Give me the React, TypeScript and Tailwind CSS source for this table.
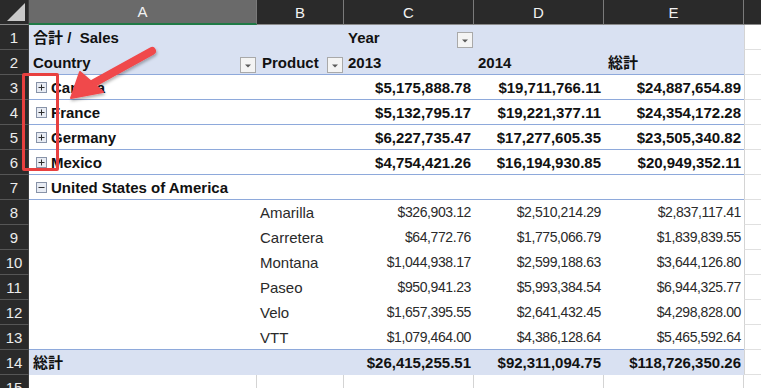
import React from "react";

type Num3 = [string, string, string];

const countries: { name: string; v: Num3 }[] = [
  { name: "Canada", v: ["$5,175,888.78", "$19,711,766.11", "$24,887,654.89"] },
  { name: "France", v: ["$5,132,795.17", "$19,221,377.11", "$24,354,172.28"] },
  { name: "Germany", v: ["$6,227,735.47", "$17,277,605.35", "$23,505,340.82"] },
  { name: "Mexico", v: ["$4,754,421.26", "$16,194,930.85", "$20,949,352.11"] },
];

const products: { name: string; v: Num3 }[] = [
  { name: "Amarilla", v: ["$326,903.12", "$2,510,214.29", "$2,837,117.41"] },
  { name: "Carretera", v: ["$64,772.76", "$1,775,066.79", "$1,839,839.55"] },
  { name: "Montana", v: ["$1,044,938.17", "$2,599,188.63", "$3,644,126.80"] },
  { name: "Paseo", v: ["$950,941.23", "$5,993,384.54", "$6,944,325.77"] },
  { name: "Velo", v: ["$1,657,395.55", "$2,641,432.45", "$4,298,828.00"] },
  { name: "VTT", v: ["$1,079,464.00", "$4,386,128.64", "$5,465,592.64"] },
];

function RowHead({ n }: { n: number }) {
  return (
    <div className="w-[29px] shrink-0 h-full bg-[#2a2a2a] border-b border-r border-b-[#565656] border-r-[#3d3d3d] flex items-center justify-center text-[15px] text-[#ececec]">
      {n}
    </div>
  );
}

function FCell() {
  return <div className="w-[17px] shrink-0 h-full border-l border-b border-l-[#d4d4d4] border-b-[#e0e0e0] bg-white" />;
}

function Dropdown() {
  return (
    <div className="ml-auto self-end mb-[1px] mr-[1px] w-[16px] h-[16px] shrink-0 border border-[#a9a9a9] bg-[#f4f4f4] flex items-center justify-center">
      <svg width="8" height="6" viewBox="0 0 8 6" className="mt-[2px]">
        <path d="M1 1.5 L7 1.5 L4 4.5 Z" fill="#5a5a5a" />
      </svg>
    </div>
  );
}

function Toggle({ plus }: { plus: boolean }) {
  return (
    <svg width="11" height="11" viewBox="0 0 11 11" className="shrink-0 ml-[7px] mr-[4px]">
      <rect x="0.5" y="0.5" width="10" height="10" fill="#e8ecf4" stroke="#8893a8" />
      <path d="M2.5 5.5h6" stroke="#2e2e2e" />
      {plus && <path d="M5.5 2.5v6" stroke="#2e2e2e" />}
    </svg>
  );
}

function NumCells({ v, bold }: { v: Num3; bold: boolean }) {
  const cls = bold
    ? "font-bold text-[15px] text-[#111]"
    : "text-[14px] tracking-[-0.4px] text-[#2a2a2a]";
  return (
    <>
      <div className={`w-[130px] shrink-0 flex items-center justify-end pr-[3px] ${cls}`}>{v[0]}</div>
      <div className={`w-[130px] shrink-0 flex items-center justify-end pr-[3px] ${cls}`}>{v[1]}</div>
      <div className={`w-[140px] shrink-0 flex items-center justify-end pr-[3px] ${cls}`}>{v[2]}</div>
    </>
  );
}

export default function App() {
  return (
    <div className="relative w-[761px] h-[388px] overflow-hidden bg-white font-['Liberation_Sans','Noto_Sans_CJK_JP',sans-serif] leading-none">
      {/* column header */}
      <div className="flex h-[25px]">
        <div className="w-[29px] shrink-0 h-full bg-[#2a2a2a] border-b border-r border-b-[#8a8a8a] border-r-[#3d3d3d] flex items-end justify-end pb-[3px] pr-[3px]">
          <svg width="18" height="18" viewBox="0 0 18 18">
            <path d="M18 0 L18 18 L0 18 Z" fill="#c9c9c9" />
          </svg>
        </div>
        <div className="w-[228px] shrink-0 h-full bg-[#6a6a6a] border-b-2 border-b-[#1f7a46] border-r border-r-[#7a7a7a] flex items-center justify-center text-[15px] text-[#f2f2f2]">A</div>
        <div className="w-[87px] shrink-0 h-full bg-[#2a2a2a] border-b border-b-[#8a8a8a] border-r border-r-[#7a7a7a] flex items-center justify-center text-[15px] text-[#f2f2f2]">B</div>
        <div className="w-[130px] shrink-0 h-full bg-[#2a2a2a] border-b border-b-[#8a8a8a] border-r border-r-[#7a7a7a] flex items-center justify-center text-[15px] text-[#f2f2f2]">C</div>
        <div className="w-[130px] shrink-0 h-full bg-[#2a2a2a] border-b border-b-[#8a8a8a] border-r border-r-[#7a7a7a] flex items-center justify-center text-[15px] text-[#f2f2f2]">D</div>
        <div className="w-[140px] shrink-0 h-full bg-[#2a2a2a] border-b border-b-[#8a8a8a] border-r border-r-[#7a7a7a] flex items-center justify-center text-[15px] text-[#f2f2f2]">E</div>
        <div className="w-[17px] shrink-0 h-full bg-[#2a2a2a] border-b border-b-[#8a8a8a]" />
      </div>

      {/* row 1 */}
      <div className="flex h-[25px]">
        <RowHead n={1} />
        <div className="flex w-[715px] shrink-0 bg-[#d9e1f2] border-b border-b-[#d9e1f2] font-bold text-[15px] text-[#111]">
          <div className="w-[228px] shrink-0 flex items-center pl-[4px]">合計 /&nbsp;&nbsp;Sales</div>
          <div className="w-[87px] shrink-0" />
          <div className="w-[130px] shrink-0 flex items-center pl-[4px]">
            <span>Year</span>
            <Dropdown />
          </div>
          <div className="w-[130px] shrink-0" />
          <div className="w-[140px] shrink-0" />
        </div>
        <FCell />
      </div>

      {/* row 2 */}
      <div className="flex h-[25px]">
        <RowHead n={2} />
        <div className="flex w-[715px] shrink-0 bg-[#d9e1f2] border-b border-b-[#8ea9db] font-bold text-[15px] text-[#111]">
          <div className="w-[228px] shrink-0 flex items-center pl-[4px]">
            <span>Country</span>
            <Dropdown />
          </div>
          <div className="w-[87px] shrink-0 flex items-center pl-[5px]">
            <span>Product</span>
            <Dropdown />
          </div>
          <div className="w-[130px] shrink-0 flex items-center pl-[4px]">2013</div>
          <div className="w-[130px] shrink-0 flex items-center pl-[4px]">2014</div>
          <div className="w-[140px] shrink-0 flex items-center pl-[4px]">総計</div>
        </div>
        <FCell />
      </div>

      {/* rows 3-6 */}
      {countries.map((c, i) => (
        <div key={c.name} className="flex h-[25px]">
          <RowHead n={3 + i} />
          <div className="flex w-[715px] shrink-0 bg-white border-b border-b-[#8ea9db]">
            <div className="w-[228px] shrink-0 flex items-center font-bold text-[15px] text-[#111]">
              <Toggle plus />
              <span>{c.name}</span>
            </div>
            <div className="w-[87px] shrink-0" />
            <NumCells v={c.v} bold />
          </div>
          <FCell />
        </div>
      ))}

      {/* row 7 */}
      <div className="flex h-[25px]">
        <RowHead n={7} />
        <div className="flex w-[715px] shrink-0 bg-white border-b border-b-[#8ea9db]">
          <div className="w-[228px] shrink-0 flex items-center font-bold text-[15px] text-[#111] whitespace-nowrap">
            <Toggle plus={false} />
            <span>United States of America</span>
          </div>
        </div>
        <FCell />
      </div>

      {/* rows 8-13 */}
      {products.map((p, i) => (
        <div key={p.name} className="flex h-[25px]">
          <RowHead n={8 + i} />
          <div
            className={`flex w-[715px] shrink-0 bg-white border-b ${
              i === products.length - 1 ? "border-b-[#8ea9db]" : "border-b-white"
            }`}
          >
            <div className="w-[228px] shrink-0" />
            <div className="w-[87px] shrink-0 flex items-center pl-[3px] text-[15px] text-[#2a2a2a]">{p.name}</div>
            <NumCells v={p.v} bold={false} />
          </div>
          <FCell />
        </div>
      ))}

      {/* row 14 */}
      <div className="flex h-[25px]">
        <RowHead n={14} />
        <div className="flex w-[715px] shrink-0 bg-[#d9e1f2] border-b border-b-[#d9e1f2]">
          <div className="w-[228px] shrink-0 flex items-center pl-[4px] font-bold text-[15px] text-[#111]">総計</div>
          <div className="w-[87px] shrink-0" />
          <NumCells v={["$26,415,255.51", "$92,311,094.75", "$118,726,350.26"]} bold />
        </div>
        <FCell />
      </div>

      {/* row 15 */}
      <div className="flex h-[25px]">
        <RowHead n={15} />
        <div className="w-[228px] shrink-0 border-r border-b border-[#d4d4d4]" />
        <div className="w-[87px] shrink-0 border-r border-b border-[#d4d4d4]" />
        <div className="w-[130px] shrink-0 border-r border-b border-[#d4d4d4]" />
        <div className="w-[130px] shrink-0 border-r border-b border-[#d4d4d4]" />
        <div className="w-[140px] shrink-0 border-r border-b border-[#d4d4d4]" />
        <div className="w-[16px] shrink-0 border-b border-[#d4d4d4]" />
      </div>

      {/* annotation: red box */}
      <div className="absolute left-[22px] top-[73px] w-[37px] h-[98px] border-[3px] border-[#e8403f] rounded-[2px] pointer-events-none" />

      {/* annotation: red arrow */}
      <svg className="absolute left-0 top-0 pointer-events-none" width="761" height="388" viewBox="0 0 761 388">
        <defs>
          <filter id="sh" x="-20%" y="-20%" width="140%" height="140%">
            <feDropShadow dx="1" dy="2" stdDeviation="1.5" floodColor="#000" floodOpacity="0.3" />
          </filter>
        </defs>
        <g filter="url(#sh)">
          <path d="M152 51 L94 83" stroke="#f0484b" strokeWidth="8" strokeLinecap="round" />
          <path d="M71 98 L80 72 L103 92 Z" fill="#f0484b" stroke="#f0484b" strokeWidth="2" strokeLinejoin="round" />
        </g>
      </svg>
    </div>
  );
}
